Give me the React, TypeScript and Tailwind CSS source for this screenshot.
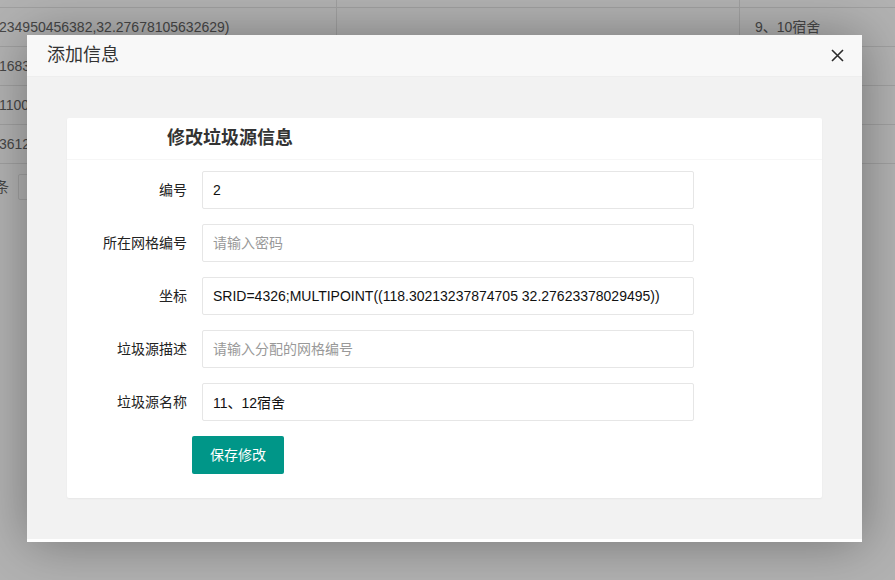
import type { ReactNode } from "react";

const font = { fontFamily: '"Liberation Sans", "Noto Sans CJK SC", sans-serif' };

const rows = [
  { a: "234950456382,32.27678105632629)", c: "9、10宿舍" },
  { a: "1683445678321,32.2765419203", c: "" },
  { a: "1100923745821,32.2711830021", c: "" },
  { a: "3612098273411,32.2789102733", c: "" },
];

function FormRow({ label, children }: { label: string; children: ReactNode }) {
  return (
    <div className="flex items-center mb-[15px]">
      <label className="w-[120px] pr-[15px] text-right text-[14px] text-[#222]">{label}</label>
      {children}
    </div>
  );
}

function TextInput({ value, placeholder }: { value?: string; placeholder?: string }) {
  return (
    <input
      readOnly
      value={value ?? ""}
      placeholder={placeholder}
      className="w-[492px] h-[38px] border border-[#e6e6e6] rounded-[2px] pl-[10px] text-[14px] text-[#111] placeholder:text-[#999] bg-white outline-none"
      style={font}
    />
  );
}

export default function App() {
  return (
    <div className="relative w-[895px] h-[580px] overflow-hidden bg-white" style={font}>
      {/* BACKGROUND TABLE */}
      <div className="flex flex-col text-[14px] text-[#666]">
        <div className="h-[8px] border-b border-[#e6e6e6] flex">
          <div className="w-[337px] border-r border-[#e6e6e6]" />
          <div className="w-[403px] border-r border-[#e6e6e6]" />
        </div>
        {rows.map((r, i) => (
          <div key={i} className="h-[39px] border-b border-[#e6e6e6] flex items-center">
            <div className="w-[337px] h-full border-r border-[#e6e6e6] flex items-center overflow-hidden whitespace-nowrap">
              <span className="-ml-[1px]">{r.a}</span>
            </div>
            <div className="w-[403px] h-full border-r border-[#e6e6e6]" />
            <div className="pl-[15px]">{r.c}</div>
          </div>
        ))}
        <div className="flex items-center h-[44px] mt-[1px]">
          <span className="-ml-[5px]">条</span>
          <div className="ml-[9px] w-[80px] h-[26px] border border-[#e6e6e6] rounded-[2px]" />
        </div>
      </div>

      {/* SHADE */}
      <div className="absolute inset-0 bg-black/30" />

      {/* DIALOG */}
      <div className="absolute left-[27px] top-[35px] w-[835px] h-[507px] bg-white flex flex-col shadow-[1px_1px_50px_rgba(0,0,0,0.35)]">
        <div className="h-[42px] shrink-0 bg-[#f8f8f8] border-b border-[#eee] flex items-center justify-between pl-[20px] pr-[18px]">
          <span className="text-[18px] text-[#333]">添加信息</span>
          <svg width="13" height="13" viewBox="0 0 13 13">
            <path d="M1 1 L12 12 M12 1 L1 12" stroke="#2b2b2b" strokeWidth="1.6" />
          </svg>
        </div>

        <div className="flex-1 bg-[#f2f2f2] mb-[3px] px-[40px] pt-[41px]">
          <div className="bg-white rounded-[2px] shadow-[0_1px_2px_rgba(0,0,0,0.05)]">
            <div className="h-[42px] border-b border-[#f6f6f6] flex items-center pl-[100px]">
              <span className="text-[18px] font-bold text-[#333]">修改垃圾源信息</span>
            </div>
            <div className="px-[15px] pt-[11px] pb-[24px]">
              <FormRow label="编号">
                <TextInput value="2" />
              </FormRow>
              <FormRow label="所在网格编号">
                <TextInput placeholder="请输入密码" />
              </FormRow>
              <FormRow label="坐标">
                <TextInput value="SRID=4326;MULTIPOINT((118.30213237874705 32.27623378029495))" />
              </FormRow>
              <FormRow label="垃圾源描述">
                <TextInput placeholder="请输入分配的网格编号" />
              </FormRow>
              <FormRow label="垃圾源名称">
                <TextInput value="11、12宿舍" />
              </FormRow>
              <div className="pl-[110px]">
                <button className="h-[38px] w-[92px] bg-[#009688] text-white text-[14px] rounded-[2px]" style={font}>
                  保存修改
                </button>
              </div>
            </div>
          </div>
        </div>
      </div>
    </div>
  );
}
